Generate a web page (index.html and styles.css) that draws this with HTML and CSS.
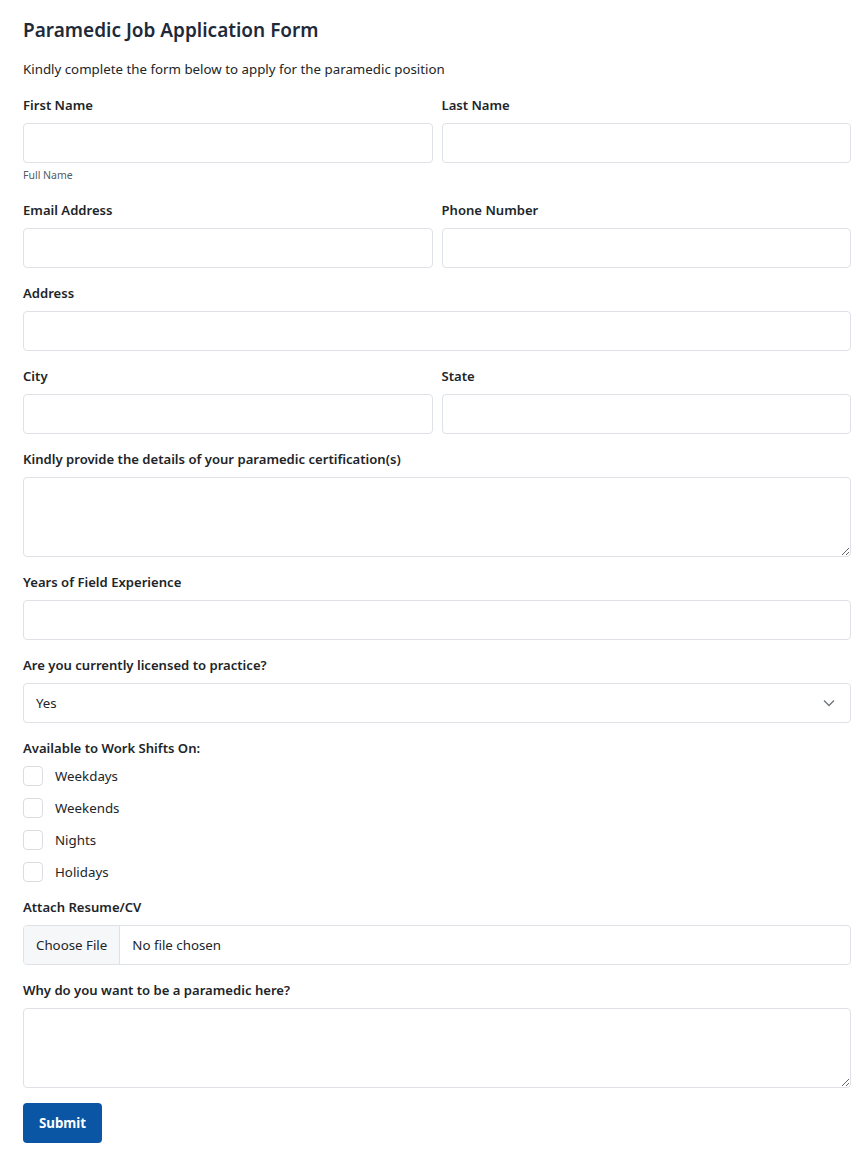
FILE: index.html
```html
<!DOCTYPE html>
<html lang="en">
<head>
    <meta charset="UTF-8">
    <meta name="viewport" content="width=device-width, initial-scale=1.0">
    <title>Paramedic Job Application Form</title>
    <link rel="stylesheet" href="styles.css">
</head>
<body>
    <div class="container">
        <h1 class="form-title">Paramedic Job Application Form</h1>
        <p class="form-intro">Kindly complete the form below to apply for the paramedic position</p>

        <form class="app-form">
            <div class="row">
                <div class="field">
                    <label class="field-label" for="firstName">First Name</label>
                    <input class="text-input" type="text" id="firstName">
                    <div class="help-text">Full Name</div>
                </div>
                <div class="field">
                    <label class="field-label" for="lastName">Last Name</label>
                    <input class="text-input" type="text" id="lastName">
                </div>
            </div>

            <div class="row">
                <div class="field">
                    <label class="field-label" for="email">Email Address</label>
                    <input class="text-input" type="text" id="email">
                </div>
                <div class="field">
                    <label class="field-label" for="phone">Phone Number</label>
                    <input class="text-input" type="text" id="phone">
                </div>
            </div>

            <div class="field">
                <label class="field-label" for="address">Address</label>
                <input class="text-input" type="text" id="address">
            </div>

            <div class="row">
                <div class="field">
                    <label class="field-label" for="city">City</label>
                    <input class="text-input" type="text" id="city">
                </div>
                <div class="field">
                    <label class="field-label" for="state">State</label>
                    <input class="text-input" type="text" id="state">
                </div>
            </div>

            <div class="field">
                <label class="field-label" for="certs">Kindly provide the details of your paramedic certification(s)</label>
                <textarea class="text-area" id="certs"></textarea>
            </div>

            <div class="field">
                <label class="field-label" for="years">Years of Field Experience</label>
                <input class="text-input" type="text" id="years">
            </div>

            <div class="field">
                <label class="field-label" for="licensed">Are you currently licensed to practice?</label>
                <div class="select-wrap">
                    <select class="select-input" id="licensed">
                        <option>Yes</option>
                        <option>No</option>
                    </select>
                    <svg class="select-arrow" width="12" height="8" viewBox="0 0 12 8">
                        <path d="M1 1.5 L6 6.5 L11 1.5" fill="none" stroke="#6c757d" stroke-width="1.3"/>
                    </svg>
                </div>
            </div>

            <div class="field">
                <div class="field-label">Available to Work Shifts On:</div>
                <div class="check-list">
                    <label class="check-item"><input type="checkbox" class="check-box"> Weekdays</label>
                    <label class="check-item"><input type="checkbox" class="check-box"> Weekends</label>
                    <label class="check-item"><input type="checkbox" class="check-box"> Nights</label>
                    <label class="check-item"><input type="checkbox" class="check-box"> Holidays</label>
                </div>
            </div>

            <div class="field">
                <div class="field-label">Attach Resume/CV</div>
                <div class="file-input">
                    <span class="file-btn">Choose File</span>
                    <span class="file-name">No file chosen</span>
                </div>
            </div>

            <div class="field">
                <label class="field-label" for="why">Why do you want to be a paramedic here?</label>
                <textarea class="text-area" id="why"></textarea>
            </div>

            <button type="button" class="submit-btn">Submit</button>
        </form>
    </div>
</body>
</html>
```

FILE: styles.css
```css
* {
    box-sizing: border-box;
    margin: 0;
    padding: 0;
}

body {
    font-family: 'Noto Sans', 'Open Sans', sans-serif;
    font-size: 13.3px;
    color: #212529;
    background-color: #ffffff;
}

.container {
    padding: 18px 12px 20px 23px;
}

.form-title {
    font-size: 19px;
    font-weight: 600;
    line-height: 24px;
    color: #1e2a3a;
    margin-bottom: 17px;
}

.form-intro {
    font-size: 13.3px;
    line-height: 20px;
    margin-bottom: 16px;
}

.row {
    display: flex;
    gap: 9px;
}

.row .field {
    flex: 1;
}

.field {
    margin-bottom: 15px;
}

.field-label {
    display: block;
    font-weight: 600;
    font-size: 13.1px;
    line-height: 20px;
    margin-bottom: 8px;
}

.text-input,
.text-area,
.select-input {
    display: block;
    width: 100%;
    height: 40px;
    border: 1px solid #dee2e6;
    border-radius: 4px;
    background: #fff;
    font-family: inherit;
    font-size: 13.3px;
    color: #212529;
    padding: 0 12px;
    outline: none;
}

.text-area {
    height: 80px;
    padding: 8px 12px;
    resize: vertical;
}

.help-text {
    font-size: 10.5px;
    line-height: 16px;
    color: #555c63;
    margin-top: 4px;
    margin-bottom: 2px;
}

.select-wrap {
    position: relative;
}

.select-input {
    appearance: none;
    -webkit-appearance: none;
}

.select-arrow {
    position: absolute;
    right: 16px;
    top: 16px;
    pointer-events: none;
}

.check-list {
    display: flex;
    flex-direction: column;
    gap: 12px;
}

.check-item {
    display: flex;
    align-items: center;
    gap: 12px;
    height: 20px;
    line-height: 20px;
}

.check-box {
    appearance: none;
    -webkit-appearance: none;
    width: 20px;
    height: 20px;
    border: 1px solid #d9dde1;
    border-radius: 4px;
    background: #fff;
    margin: 0;
}

.file-input {
    display: flex;
    height: 40px;
    border: 1px solid #dee2e6;
    border-radius: 4px;
    overflow: hidden;
}

.file-btn {
    display: flex;
    align-items: center;
    padding: 0 12px;
    background: #f6f7f9;
    border-right: 1px solid #dee2e6;
}

.file-name {
    display: flex;
    align-items: center;
    padding: 0 12px;
}

.submit-btn {
    display: block;
    width: 79px;
    height: 40px;
    border: none;
    border-radius: 4px;
    background-color: #0b56a4;
    color: #fff;
    font-family: inherit;
    font-size: 13.3px;
    font-weight: 700;
    cursor: pointer;
}
```
